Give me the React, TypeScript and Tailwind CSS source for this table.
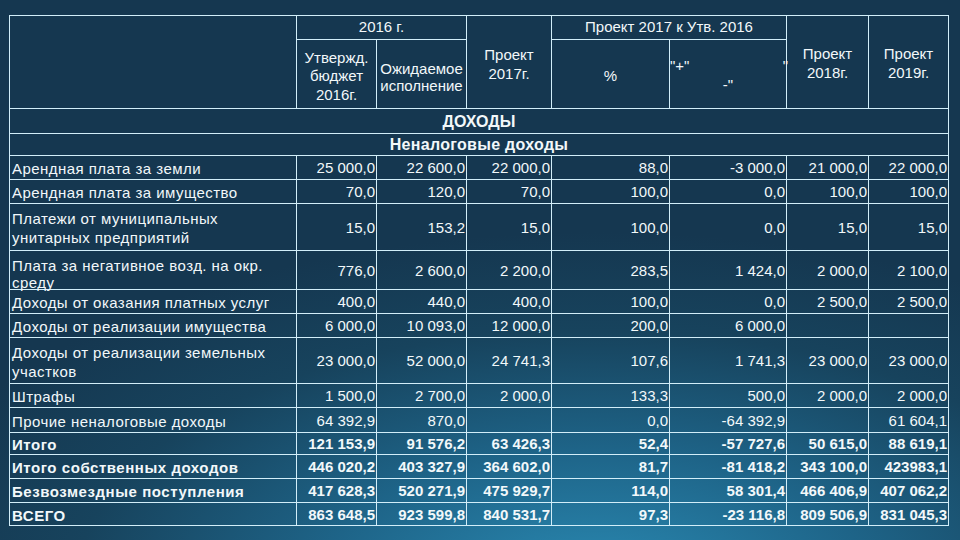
import React from "react";

type Row = { label: string[]; v: string[]; bold?: boolean; tight?: boolean };

const rows: Row[] = [
  { label: ["Арендная плата за земли"], v: ["25 000,0", "22 600,0", "22 000,0", "88,0", "-3 000,0", "21 000,0", "22 000,0"] },
  { label: ["Арендная плата за имущество"], v: ["70,0", "120,0", "70,0", "100,0", "0,0", "100,0", "100,0"] },
  { label: ["Платежи от муниципальных", "унитарных предприятий"], v: ["15,0", "153,2", "15,0", "100,0", "0,0", "15,0", "15,0"] },
  { label: ["Плата за негативное возд. на окр.", "среду"], v: ["776,0", "2 600,0", "2 200,0", "283,5", "1 424,0", "2 000,0", "2 100,0"], tight: true },
  { label: ["Доходы от оказания платных услуг"], v: ["400,0", "440,0", "400,0", "100,0", "0,0", "2 500,0", "2 500,0"] },
  { label: ["Доходы от реализации имущества"], v: ["6 000,0", "10 093,0", "12 000,0", "200,0", "6 000,0", "", ""] },
  { label: ["Доходы от реализации земельных", "участков"], v: ["23 000,0", "52 000,0", "24 741,3", "107,6", "1 741,3", "23 000,0", "23 000,0"] },
  { label: ["Штрафы"], v: ["1 500,0", "2 700,0", "2 000,0", "133,3", "500,0", "2 000,0", "2 000,0"] },
  { label: ["Прочие неналоговые доходы"], v: ["64 392,9", "870,0", "", "0,0", "-64 392,9", "", "61 604,1"] },
  { label: ["Итого"], v: ["121 153,9", "91 576,2", "63 426,3", "52,4", "-57 727,6", "50 615,0", "88 619,1"], bold: true },
  { label: ["Итого собственных доходов"], v: ["446 020,2", "403 327,9", "364 602,0", "81,7", "-81 418,2", "343 100,0", "423983,1"], bold: true },
  { label: ["Безвозмездные поступления"], v: ["417 628,3", "520 271,9", "475 929,7", "114,0", "58 301,4", "466 406,9", "407 062,2"], bold: true },
  { label: ["ВСЕГО"], v: ["863 648,5", "923 599,8", "840 531,7", "97,3", "-23 116,8", "809 506,9", "831 045,3"], bold: true },
];

const cell = "border-r border-b border-[#d2eef9]";

export default function App() {
  return (
    <div
      className="w-[960px] h-[540px] overflow-hidden pt-[15px] pl-[9px] text-[#f2f8fa] bg-[radial-gradient(ellipse_75%_65%_at_62%_108%,#2a8ab3_0%,#1e6488_38%,#17435d_72%,#153750_100%)]"
      style={{ fontFamily: '"Liberation Sans", Arial, sans-serif' }}
    >
      <div className="grid w-[940px] border-l border-t border-[#d2eef9] grid-cols-[287px_80px_90px_85px_118px_117px_82px_80px] grid-rows-[24px_69px_25px_22px_24px_24px_47px_39px_24px_24px_46px_24px_25px_22px_24px_24px_23px] text-[15px]">
        {/* header */}
        <div className={`${cell} row-span-2`} />
        <div className={`${cell} col-span-2 flex items-center justify-center`}>2016 г.</div>
        <div className={`${cell} row-span-2 flex items-center justify-center text-center leading-[19px] pt-[3px]`}>
          Проект<br />2017г.
        </div>
        <div className={`${cell} col-span-2 flex items-center justify-center`}>Проект 2017 к Утв. 2016</div>
        <div className={`${cell} row-span-2 flex items-center justify-center text-center leading-[19px] pt-[2px]`}>
          Проект<br />2018г.
        </div>
        <div className={`${cell} row-span-2 flex items-center justify-center text-center leading-[19px] pt-[2px]`}>
          Проект<br />2019г.
        </div>
        <div className={`${cell} flex items-center justify-center text-center leading-[18.5px] pt-[5px]`}>
          Утвержд.<br />бюджет<br />2016г.
        </div>
        <div className={`${cell} flex items-center justify-center text-center leading-[17px] pt-[5px]`}>
          Ожидаемое<br />исполнение
        </div>
        <div className={`${cell} flex items-center justify-center pt-[4px]`}>%</div>
        <div className={`${cell} flex flex-col justify-center leading-[19px] pt-[2px]`}>
          <div className="flex justify-between">
            <span>"+"</span>
            <span className="-mr-[2px]">"</span>
          </div>
          <div className="text-center">-"</div>
        </div>

        <div className={`${cell} col-span-8 flex items-center justify-center font-bold text-[16px] pt-[2px]`}>ДОХОДЫ</div>
        <div className={`${cell} col-span-8 flex items-center justify-center font-bold text-[16px] tracking-[0.3px] pt-[1px]`}>
          Неналоговые доходы
        </div>

        {rows.map((r, i) => (
          <React.Fragment key={i}>
            <div
              className={`${cell} flex pl-[2px] whitespace-nowrap ${r.bold ? "font-bold tracking-[0.55px]" : "tracking-[0.45px]"} ${
                r.tight ? "items-start pt-[6px] leading-[17px]" : "items-center pt-[2px] leading-[19px]"
              }`}
            >
              <div>
                {r.label.map((l, j) => (
                  <div key={j}>{l}</div>
                ))}
              </div>
            </div>
            {r.v.map((v, j) => (
              <div
                key={j}
                className={`${cell} flex items-center justify-end pr-[1px] pt-[2px] whitespace-nowrap ${r.bold ? "font-bold" : ""}`}
              >
                {v}
              </div>
            ))}
          </React.Fragment>
        ))}
      </div>
    </div>
  );
}
